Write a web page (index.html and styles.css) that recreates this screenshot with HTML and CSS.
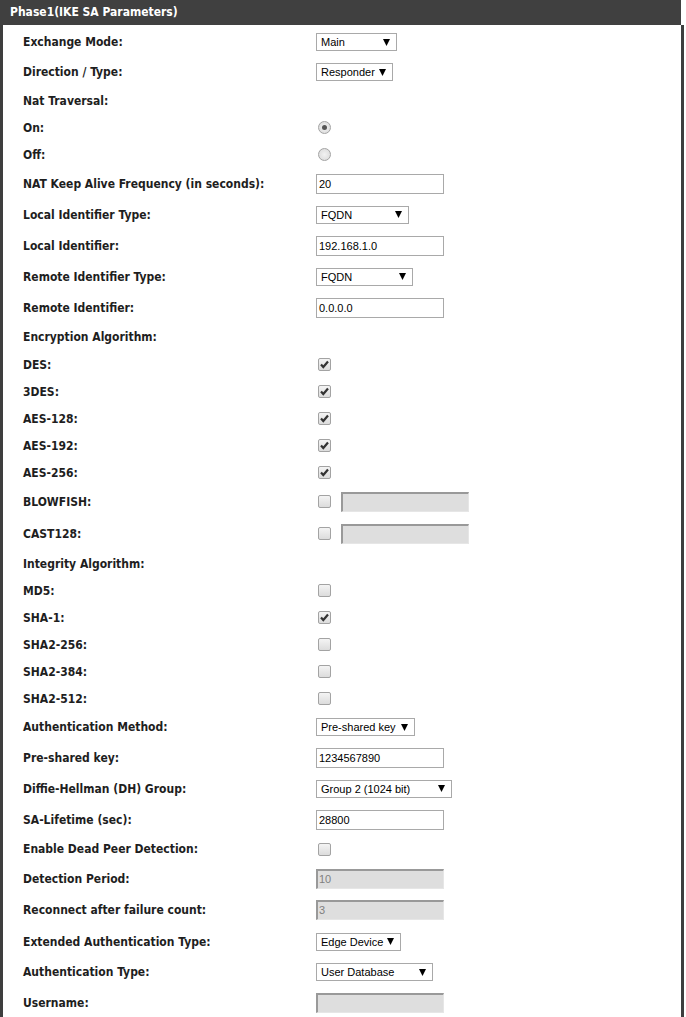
FILE: index.html
```html
<!DOCTYPE html>
<html>
<head>
<meta charset="utf-8">
<link rel="stylesheet" href="styles.css">
</head>
<body>
<div class="panel">
  <div class="hdr">Phase1(IKE SA Parameters)</div>
  <div class="body">
    <div class="row s"><div class="lbl">Exchange Mode:</div><div class="ctl"><div class="sel" style="width:81px"><span>Main</span><svg class="arr" width="7" height="7" viewBox="0 0 7 7"><polygon points="0,0 7,0 3.5,7"/></svg></div></div></div>
    <div class="row s"><div class="lbl">Direction / Type:</div><div class="ctl"><div class="sel" style="width:77px"><span>Responder</span><svg class="arr" width="7" height="7" viewBox="0 0 7 7"><polygon points="0,0 7,0 3.5,7"/></svg></div></div></div>
    <div class="row"><div class="lbl">Nat Traversal:</div><div class="ctl"></div></div>
    <div class="row"><div class="lbl">On:</div><div class="ctl"><span class="rb on"></span></div></div>
    <div class="row"><div class="lbl">Off:</div><div class="ctl"><span class="rb"></span></div></div>
    <div class="row i"><div class="lbl">NAT Keep Alive Frequency (in seconds):</div><div class="ctl"><div class="inp">20</div></div></div>
    <div class="row i"><div class="lbl">Local Identifier Type:</div><div class="ctl"><div class="sel" style="width:93px"><span>FQDN</span><svg class="arr" width="7" height="7" viewBox="0 0 7 7"><polygon points="0,0 7,0 3.5,7"/></svg></div></div></div>
    <div class="row i"><div class="lbl">Local Identifier:</div><div class="ctl"><div class="inp">192.168.1.0</div></div></div>
    <div class="row i"><div class="lbl">Remote Identifier Type:</div><div class="ctl"><div class="sel" style="width:97px"><span>FQDN</span><svg class="arr" width="7" height="7" viewBox="0 0 7 7"><polygon points="0,0 7,0 3.5,7"/></svg></div></div></div>
    <div class="row i"><div class="lbl">Remote Identifier:</div><div class="ctl"><div class="inp">0.0.0.0</div></div></div>
    <div class="row t"><div class="lbl">Encryption Algorithm:</div><div class="ctl"></div></div>
    <div class="row"><div class="lbl">DES:</div><div class="ctl"><span class="cb on"><svg width="11" height="11" viewBox="0 0 11 11"><path d="M2 5.5 L4.3 8 L9 2.5" /></svg></span></div></div>
    <div class="row"><div class="lbl">3DES:</div><div class="ctl"><span class="cb on"><svg width="11" height="11" viewBox="0 0 11 11"><path d="M2 5.5 L4.3 8 L9 2.5" /></svg></span></div></div>
    <div class="row"><div class="lbl">AES-128:</div><div class="ctl"><span class="cb on"><svg width="11" height="11" viewBox="0 0 11 11"><path d="M2 5.5 L4.3 8 L9 2.5" /></svg></span></div></div>
    <div class="row"><div class="lbl">AES-192:</div><div class="ctl"><span class="cb on"><svg width="11" height="11" viewBox="0 0 11 11"><path d="M2 5.5 L4.3 8 L9 2.5" /></svg></span></div></div>
    <div class="row"><div class="lbl">AES-256:</div><div class="ctl"><span class="cb on"><svg width="11" height="11" viewBox="0 0 11 11"><path d="M2 5.5 L4.3 8 L9 2.5" /></svg></span></div></div>
    <div class="row i"><div class="lbl">BLOWFISH:</div><div class="ctl pair"><span class="cb"></span><div class="inp dis"></div></div></div>
    <div class="row x"><div class="lbl">CAST128:</div><div class="ctl pair"><span class="cb"></span><div class="inp dis"></div></div></div>
    <div class="row"><div class="lbl">Integrity Algorithm:</div><div class="ctl"></div></div>
    <div class="row"><div class="lbl">MD5:</div><div class="ctl"><span class="cb"></span></div></div>
    <div class="row"><div class="lbl">SHA-1:</div><div class="ctl"><span class="cb on"><svg width="11" height="11" viewBox="0 0 11 11"><path d="M2 5.5 L4.3 8 L9 2.5" /></svg></span></div></div>
    <div class="row"><div class="lbl">SHA2-256:</div><div class="ctl"><span class="cb"></span></div></div>
    <div class="row"><div class="lbl">SHA2-384:</div><div class="ctl"><span class="cb"></span></div></div>
    <div class="row"><div class="lbl">SHA2-512:</div><div class="ctl"><span class="cb"></span></div></div>
    <div class="row s"><div class="lbl">Authentication Method:</div><div class="ctl"><div class="sel" style="width:99px"><span>Pre-shared key</span><svg class="arr" width="7" height="7" viewBox="0 0 7 7"><polygon points="0,0 7,0 3.5,7"/></svg></div></div></div>
    <div class="row i"><div class="lbl">Pre-shared key:</div><div class="ctl"><div class="inp">1234567890</div></div></div>
    <div class="row i"><div class="lbl">Diffie-Hellman (DH) Group:</div><div class="ctl"><div class="sel" style="width:136px"><span>Group 2 (1024 bit)</span><svg class="arr" width="7" height="7" viewBox="0 0 7 7"><polygon points="0,0 7,0 3.5,7"/></svg></div></div></div>
    <div class="row i"><div class="lbl">SA-Lifetime (sec):</div><div class="ctl"><div class="inp">28800</div></div></div>
    <div class="row t"><div class="lbl">Enable Dead Peer Detection:</div><div class="ctl"><span class="cb"></span></div></div>
    <div class="row i"><div class="lbl">Detection Period:</div><div class="ctl"><div class="inp dis">10</div></div></div>
    <div class="row w"><div class="lbl">Reconnect after failure count:</div><div class="ctl"><div class="inp dis">3</div></div></div>
    <div class="row i"><div class="lbl">Extended Authentication Type:</div><div class="ctl"><div class="sel" style="width:85px"><span>Edge Device</span><svg class="arr" width="7" height="7" viewBox="0 0 7 7"><polygon points="0,0 7,0 3.5,7"/></svg></div></div></div>
    <div class="row s"><div class="lbl">Authentication Type:</div><div class="ctl"><div class="sel" style="width:117px"><span>User Database</span><svg class="arr" width="7" height="7" viewBox="0 0 7 7"><polygon points="0,0 7,0 3.5,7"/></svg></div></div></div>
    <div class="row i"><div class="lbl">Username:</div><div class="ctl"><div class="inp dis"></div></div></div>
  </div>
</div>
</body>
</html>
```
FILE: styles.css
```css
html, body {
  margin: 0;
  padding: 0;
  background: #ffffff;
}
.panel {
  width: 684px;
}
.hdr {
  width: 671px;
  height: 25px;
  background: #404040;
  color: #ffffff;
  font-family: "DejaVu Sans Condensed", "DejaVu Sans", sans-serif;
  font-weight: bold;
  font-size: 12px;
  line-height: 25px;
  padding-left: 10px;
}
.body {
  border-left: 3px solid #3e3e3e;
  border-right: 3px solid #3e3e3e;
  padding-top: 2px;
  height: 990px;
  overflow: hidden;
}
.row {
  display: grid;
  grid-template-columns: 293px 1fr;
  align-items: center;
  padding-left: 20px;
  height: 27px;
}
.row.t { height: 28px; }
.row.s { height: 30px; }
.row.i { height: 31px; }
.row.w { height: 32px; }
.row.x { height: 33px; }
.lbl {
  font-family: "DejaVu Sans Condensed", "DejaVu Sans", sans-serif;
  font-weight: bold;
  font-size: 12px;
  color: #1e1e1e;
  white-space: nowrap;
}
.ctl {
  display: flex;
  align-items: center;
  height: 100%;
}
.ctl.pair {
  gap: 10px;
}
.sel {
  box-sizing: border-box;
  height: 18px;
  border: 1px solid #a9a9a9;
  background: #ffffff;
  display: flex;
  align-items: center;
  justify-content: space-between;
  padding: 0 6px 0 4px;
  font-family: "Liberation Sans", Arial, sans-serif;
  font-size: 11px;
  color: #000000;
}
.arr polygon {
  fill: #000000;
}
.inp {
  box-sizing: border-box;
  width: 128px;
  height: 20px;
  border: 1px solid #a9a9a9;
  background: #ffffff;
  padding: 0 2px;
  font-family: "Liberation Sans", Arial, sans-serif;
  font-size: 11px;
  line-height: 18px;
  color: #000000;
}
.inp.dis {
  background: #dedede;
  border-top: 2px solid #999999;
  border-left: 2px solid #999999;
  border-right: 1px solid #e6e6e6;
  border-bottom: 1px solid #e6e6e6;
  color: #808080;
  padding-left: 1px;
  line-height: 17px;
}
.cb {
  box-sizing: border-box;
  width: 13px;
  height: 13px;
  margin-left: 2px;
  border: 1px solid #a3a3a3;
  border-radius: 2px;
  background: linear-gradient(#f4f4f4, #dcdcdc);
  display: flex;
  align-items: center;
  justify-content: center;
}
.cb svg path {
  fill: none;
  stroke: #333333;
  stroke-width: 2.2;
}
.rb {
  box-sizing: border-box;
  width: 13px;
  height: 13px;
  margin-left: 2px;
  border: 1px solid #a3a3a3;
  border-radius: 50%;
  background: radial-gradient(circle, #f2f2f2, #d8d8d8);
  display: flex;
  align-items: center;
  justify-content: center;
}
.rb.on::after {
  content: "";
  width: 5px;
  height: 5px;
  border-radius: 50%;
  background: #555555;
}
```
